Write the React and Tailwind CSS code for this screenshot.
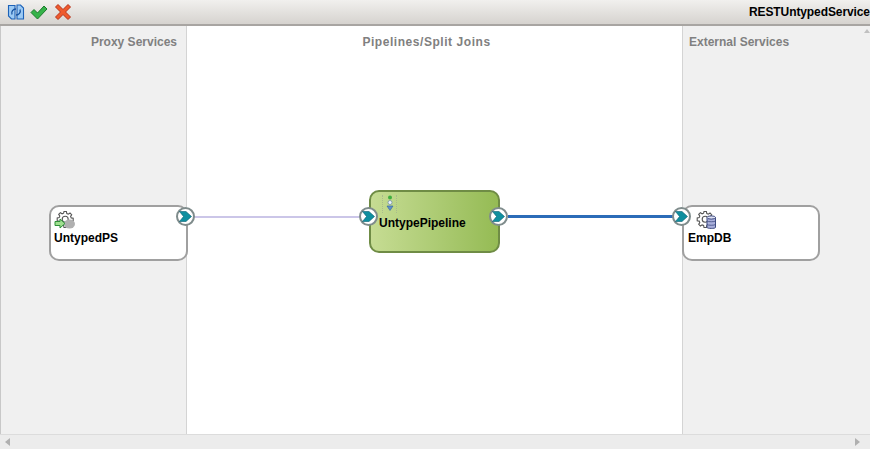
import React from 'react';

const GEAR = 'M8 1.5h2.4l.4 2 1.5.6 1.7-1.1 1.7 1.7-1.1 1.7.6 1.5 2 .4v2.4l-2 .4-.6 1.5 1.1 1.7-1.7 1.7-1.7-1.1-1.5.6-.4 2H8l-.4-2-1.5-.6-1.7 1.1-1.7-1.7 1.1-1.7-.6-1.5-2-.4V8l2-.4.6-1.5-1.1-1.7 1.7-1.7 1.7 1.1 1.5-.6z';

const Port = ({ className }) => (
  <div className={`absolute w-[19px] h-[19px] rounded-full bg-white border-2 border-[#7f8c8c] flex items-center justify-center ${className}`}>
    <svg width="13" height="11" viewBox="0 0 13 11">
      <path d="M0.5 0.5H7L12.5 5.5L7 10.5H0.5L4.5 5.5Z" fill="#0f8f9f" stroke="#0b5f70" strokeWidth="0.6" />
    </svg>
  </div>
);

const ProxyIcon = () => (
  <svg width="22" height="20" viewBox="0 0 22 20">
    <g transform="translate(2 0)">
      <path d={GEAR} fill="#fff" stroke="#555" strokeWidth="1.1" />
      <circle cx="9.2" cy="9.2" r="3" fill="#fff" stroke="#555" strokeWidth="1.1" />
    </g>
    <ellipse cx="15.500" cy="14" rx="5.500" ry="4.500" fill="#b0b0b0" />
    <path d="M1 11.500h5V9l5 4.500-5 4.500v-2.500H1z" fill="#9fe08f" stroke="#2f8f3a" strokeWidth="1" />
  </svg>
);

const DbIcon = () => (
  <svg width="22" height="20" viewBox="0 0 22 20">
    <path d={GEAR} fill="#fff" stroke="#555" strokeWidth="1.1" />
    <circle cx="9.2" cy="9.2" r="3" fill="#fff" stroke="#555" strokeWidth="1.1" />
    <path d="M11 7.500v10c0 1.200 8.500 1.200 8.500 0v-10z" fill="#aab0dc" stroke="#3d4a80" strokeWidth="1" />
    <ellipse cx="15.250" cy="7.500" rx="4.250" ry="1.600" fill="#dfe2f5" stroke="#3d4a80" strokeWidth="1" />
    <path d="M11 11c1 1 7.500 1 8.500 0M11 14.500c1 1 7.500 1 8.500 0" fill="none" stroke="#3d4a80" strokeWidth="0.8" />
  </svg>
);

const App = () => {
  return (
    <div className="w-[870px] h-[449px] flex flex-col overflow-hidden bg-[#f0f0f0] font-['Liberation_Sans',Arial,sans-serif]">
      {/* toolbar */}
      <div className="h-[26px] shrink-0 flex items-center justify-between border-b-2 border-[#a8a5a2] bg-gradient-to-b from-[#f1f0ee] to-[#d6d3cf]">
        <div className="flex items-center gap-[5px] pl-[7px]">
          <svg width="18" height="18" viewBox="0 0 18 18">
            <path d="M1.500 2.500h6.500v13.500H4.500L1.500 13z" fill="#9ccaf4" stroke="#1c62b8" strokeWidth="1.100" />
            <path d="M10 2h3.500L16.500 5v11H10z" fill="#9ccaf4" stroke="#1c62b8" strokeWidth="1.100" />
            <path d="M5 11.500C4 8.500 6 6 9 6M13 6.500c1 3-1 5.500-4 5.500" fill="none" stroke="#14509f" strokeWidth="1.300" />
          </svg>
          <svg width="18" height="16" viewBox="0 0 18 16">
            <path d="M1 8.500l3-3 3.500 3.500L14 2l3 3-9.500 10z" fill="#36b34a" stroke="#1c7a2c" strokeWidth="1" />
          </svg>
          <svg width="18" height="18" viewBox="0 0 18 18" className="ml-[1px]">
            <path d="M1.500 4L4 1.500 9 6.500l5-5L16.500 4 11.500 9l5 5-2.500 2.500-5-5-5 5L1.500 14l5-5z" fill="#ef5a2c" stroke="#b8321a" strokeWidth="1" />
          </svg>
        </div>
        <div className="w-[121px] overflow-hidden whitespace-nowrap text-[12px] tracking-[-0.1px] font-bold text-black">
          RESTUntypedServices
        </div>
      </div>

      {/* canvas */}
      <div className="relative flex-1 flex min-h-0 border-l border-[#c8c8c8]">
        <div className="w-[186px] shrink-0 bg-[#f0f0f0] border-r border-[#d4d4d4] pr-[9px] pt-[7px] text-right text-[12px] font-bold text-[#808080]">
          Proxy Services
        </div>
        <div className="flex-1 bg-white pt-[7px] pr-[16px] text-center text-[12px] tracking-[0.55px] font-bold text-[#808080]">
          Pipelines/Split Joins
        </div>
        <div className="w-[182px] shrink-0 bg-[#f0f0f0] border-l border-[#d4d4d4] pl-[6px] pt-[7px] text-[12px] font-bold text-[#808080]">
          External Services
        </div>
        <div className="w-[6px] shrink-0 flex justify-center pt-[3px] bg-[#f0f0f0]">
          <div className="w-0 h-0 border-x-[3px] border-x-transparent border-b-[4px] border-b-[#c0c0c0]" />
        </div>

        {/* wires */}
        <div className="absolute left-[193px] top-[190px] w-[168px] h-[2px] bg-[#cbc6e8]" />
        <div className="absolute left-[507px] top-[189px] w-[167px] h-[3px] bg-[#2b6cb8]" />

        {/* proxy node */}
        <div className="absolute left-[48px] top-[179px] w-[139px] h-[56px] rounded-[10px] border-2 border-[#a0a0a0] bg-white pl-[3px] pt-[3px]">
          <ProxyIcon />
          <div className="text-[12px] font-bold text-black leading-[14px] mt-[1px]">UntypedPS</div>
        </div>
        <Port className="left-[175px] top-[181px]" />

        {/* pipeline node */}
        <div className="absolute left-[368px] top-[164px] w-[131px] h-[63px] rounded-[10px] border-2 border-[#6f8c45] bg-gradient-to-r from-[#c6dc93] to-[#95bb54] pl-[8px] pt-[3px]">
          <div className="ml-[3px] w-[15px] h-[18px] flex flex-col items-center border-x border-dotted border-[#a9bb8c]">
            <svg width="8" height="17" viewBox="0 0 8 17">
              <circle cx="4" cy="2.500" r="2" fill="#3fae3f" />
              <circle cx="4" cy="7.500" r="2" fill="#eef4ff" stroke="#6a88a8" strokeWidth="0.7" />
              <path d="M1 11h6l-3 4.500z" fill="#5f90cc" stroke="#2f5f9a" strokeWidth="0.6" />
            </svg>
          </div>
          <div className="text-[12px] font-bold text-black leading-[14px] mt-[3px]">UntypePipeline</div>
        </div>
        <Port className="left-[358px] top-[181px]" />
        <Port className="left-[488px] top-[181px]" />

        {/* external node */}
        <div className="absolute left-[681px] top-[179px] w-[138px] h-[56px] rounded-[10px] border-2 border-[#a0a0a0] bg-white pl-[4px] pt-[3px]">
          <div className="ml-[8px]"><DbIcon /></div>
          <div className="text-[12px] font-bold text-black leading-[14px] mt-[1px]">EmpDB</div>
        </div>
        <Port className="left-[671px] top-[181px]" />
      </div>

      {/* bottom scrollbar */}
      <div className="h-[15px] shrink-0 flex items-center justify-between border-t border-[#dcdcdc] bg-[#ececec] px-[5px]">
        <div className="w-0 h-0 border-y-[4px] border-y-transparent border-r-[5px] border-r-[#b0b0b0]" />
        <div className="w-0 h-0 mr-[5px] border-y-[4px] border-y-transparent border-l-[5px] border-l-[#b0b0b0]" />
      </div>
    </div>
  );
};

export default App;
